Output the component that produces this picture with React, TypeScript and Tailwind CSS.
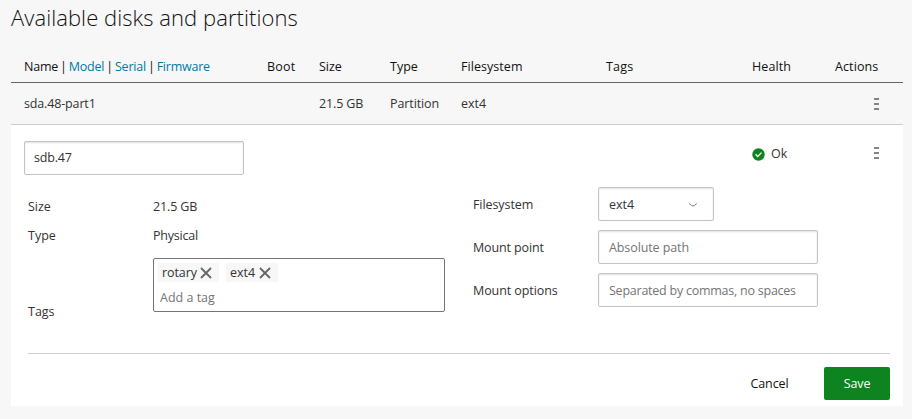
import React from "react";

const GRID = "grid grid-cols-[243px_52px_71px_71px_145px_146px_83px_1fr] pl-[13px]";
const INPUT =
  "h-[34px] rounded-[2px] border border-[#c4c4c4] bg-white px-[10px] text-[#333] shadow-[inset_0_1px_2px_rgba(0,0,0,0.12)] outline-none placeholder:text-[#757575] placeholder:opacity-100";

function MenuIcon() {
  return (
    <svg width="5" height="12" viewBox="0 0 5 12" fill="#666">
      <rect y="0.2" width="5" height="1.6" />
      <rect y="5.2" width="5" height="1.6" />
      <rect y="10.2" width="5" height="1.6" />
    </svg>
  );
}

function Tag({ label, className }: { label: string; className: string }) {
  return (
    <span className={`flex h-[19px] items-center justify-between bg-[#f7f7f7] pl-1 pr-[7px] ${className}`}>
      {label}
      <svg width="12" height="12" viewBox="0 0 12 12" fill="none" stroke="#666" strokeWidth="1.8" className="mt-px">
        <path d="M1 1l10 10M11 1L1 11" />
      </svg>
    </span>
  );
}

export default function App() {
  return (
    <div className="h-[419px] w-[912px] overflow-hidden bg-[#f7f7f7] pl-[11px] pr-[9px] font-['Open_Sans','Noto_Sans',sans-serif] text-[12.5px] leading-5 text-[#333] antialiased">
      <h1 className="h-[50px] pt-[2px] text-[22px] font-light leading-[30px] text-[#111]">
        <span className="whitespace-nowrap tracking-[0.06px]">Available disks and partitions</span>
      </h1>

      <div
        className={`${GRID} h-[33px] items-center whitespace-nowrap border-b border-[#666] pt-px font-medium text-[#111]`}
      >
        <span className="tracking-[-0.22px] [word-spacing:-1px]">
          Name | <a className="text-[#007aa6]">Model</a> | <a className="text-[#007aa6]">Serial</a> |{" "}
          <a className="text-[#007aa6]">Firmware</a>
        </span>
        <span className="tracking-[0.2px]">Boot</span>
        <span>Size</span>
        <span>Type</span>
        <span className="tracking-[0.05px]">Filesystem</span>
        <span className="tracking-[0.2px]">Tags</span>
        <span className="tracking-[0.1px]">Health</span>
        <span className="tracking-[0.1px]">Actions</span>
      </div>

      <div className={`${GRID} h-[42px] items-center whitespace-nowrap border-b border-[#cdcdcd]`}>
        <span className="tracking-[-0.15px]">sda.48-part1</span>
        <span />
        <span className="tracking-[-0.15px]">21.5 GB</span>
        <span className="tracking-[-0.1px]">Partition</span>
        <span>ext4</span>
        <span />
        <span />
        <span className="pl-[39px]">
          <MenuIcon />
        </span>
      </div>

      <section className="h-[281px] bg-white">
        <div className="flex pl-[13px] pt-4">
          <input className={`${INPUT} w-[220px] pb-0.5 pl-[9px] tracking-[-0.2px]`} defaultValue="sdb.47" />
          <div className="ml-[508px] flex h-[26px] w-[122px] items-center">
            <svg width="13" height="13" viewBox="0 0 13 13" className="mt-px">
              <circle cx="6.5" cy="6.5" r="6.2" fill="#0e8420" />
              <path d="M3.6 6.3l2.1 2.2 3.8-3.9" fill="none" stroke="#fff" strokeWidth="1.3" />
            </svg>
            <span className="ml-1.5">Ok</span>
          </div>
          <div className="flex h-6 items-center">
            <MenuIcon />
          </div>
        </div>

        <div className="ml-[17px] mr-[13px] mt-3 flex h-[167px] border-b border-[#cdcdcd]">
          <div className="w-[445px] pt-[10px]">
            <div className="flex h-[29px]">
              <span className="w-[125px]">Size</span>
              <span className="tracking-[-0.15px]">21.5 GB</span>
            </div>
            <div className="flex h-[29px]">
              <span className="w-[125px]">Type</span>
              <span className="tracking-[-0.2px]">Physical</span>
            </div>
            <div className="flex pt-[3px]">
              <span className="w-[125px] pt-[44px]">Tags</span>
              <div className="h-[54px] w-[292px] rounded-[2px] border border-[#757575] pl-1 pt-1">
                <div className="flex gap-[7px]">
                  <Tag label="rotary" className="w-[61px] tracking-[-0.1px]" />
                  <Tag label="ext4" className="w-[52px]" />
                </div>
                <input
                  className="ml-0.5 mt-[6px] block h-5 w-40 outline-none placeholder:text-[#757575] placeholder:opacity-100"
                  placeholder="Add a tag"
                />
              </div>
            </div>
          </div>
          <div className="grid auto-rows-[34px] grid-cols-[125px_220px] content-start items-center gap-y-[9px]">
            <span className="pt-px tracking-[-0.08px]">Filesystem</span>
            <div className={`${INPUT} flex w-[116px] items-center justify-between pt-px`}>
              ext4
              <svg width="8" height="4" viewBox="0 0 8 4" fill="none" stroke="#777" className="mr-[6px]">
                <path d="M.3 .6L2.6 2.5Q4 3.5 5.4 2.5L7.7 .6" />
              </svg>
            </div>
            <span className="pt-px tracking-[-0.12px]">Mount point</span>
            <input className={`${INPUT} tracking-[-0.1px]`} placeholder="Absolute path" />
            <span className="pt-px tracking-[-0.08px]">Mount options</span>
            <input className={`${INPUT} tracking-[-0.24px]`} placeholder="Separated by commas, no spaces" />
          </div>
        </div>

        <div className="mr-[13px] mt-[13px] flex justify-end">
          <button className="w-[109px] tracking-[-0.1px] text-[#111]">Cancel</button>
          <button className="h-[33px] w-[66px] rounded-[2px] bg-[#0e8420] tracking-[-0.1px] text-white">Save</button>
        </div>
      </section>
    </div>
  );
}
